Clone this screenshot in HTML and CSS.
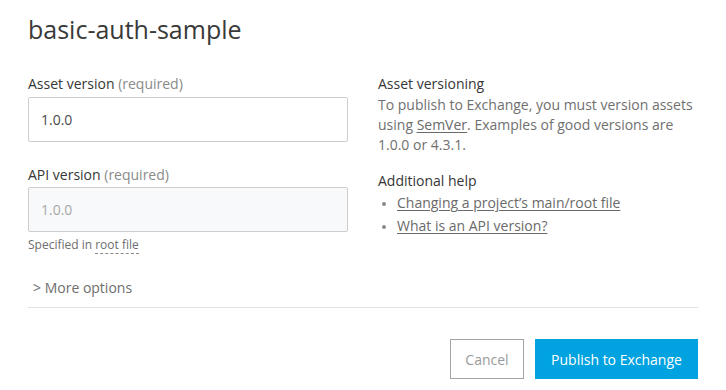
FILE: index.html
```html
<!DOCTYPE html>
<html>
<head>
<meta charset="utf-8">
<link rel="stylesheet" href="styles.css">
</head>
<body>
<div class="dialog">
  <h1 class="title">basic-auth-sample</h1>
  <div class="columns">
    <div class="form">
      <div class="field">
        <label class="label">Asset version <span class="req">(required)</span></label>
        <div class="input">1.0.0</div>
      </div>
      <div class="field">
        <label class="label tight">API version <span class="req">(required)</span></label>
        <div class="input disabled">1.0.0</div>
        <div class="hint">Specified in <span class="dotted">root file</span></div>
      </div>
    </div>
    <div class="help">
      <div class="help-title">Asset versioning</div>
      <p class="help-text">To publish to Exchange, you must version assets using <span class="link">SemVer</span>. Examples of good versions are 1.0.0 or 4.3.1.</p>
      <div class="help-title second">Additional help</div>
      <ul class="links">
        <li><span class="link">Changing a project’s main/root file</span></li>
        <li><span class="link">What is an API version?</span></li>
      </ul>
    </div>
  </div>
  <div class="more">&gt; More options</div>
  <div class="footer">
    <button class="btn cancel">Cancel</button>
    <button class="btn primary">Publish to Exchange</button>
  </div>
</div>
</body>
</html>
```

FILE: styles.css
```css
* { box-sizing: border-box; }
html, body { margin: 0; padding: 0; background: #fff; }
body { font-family: "Open Sans", "Noto Sans", sans-serif; color: #3e3e3e; }
.dialog { width: 726px; padding: 0 28px; }
.title { margin: 0; padding-top: 13px; font-size: 25px; font-weight: 400; line-height: 32px; color: #393939; }
.columns { display: grid; grid-template-columns: 320px 320px; column-gap: 30px; margin-top: 29px; }
.field { display: flex; flex-direction: column; }
.field + .field { margin-top: 23px; }
.label { font-size: 14px; line-height: 20px; color: #363636; margin-bottom: 3px; }
.label.tight { margin-bottom: 2px; }
.req { color: #8a8a8a; }
.input { height: 45px; border: 1px solid #cdcdcd; border-radius: 2px; padding: 0 12px; font-size: 14px; line-height: 43px; color: #4a4a4a; }
.input.disabled { background: #f8f9fa; color: #a8a8a8; }
.hint { font-size: 12px; line-height: 15px; color: #6e6e6e; margin-top: 5px; }
.dotted { border-bottom: 1px dashed #8a8a8a; }
.help { font-size: 14px; line-height: 20px; }
.help-title { color: #363636; }
.help-title.second { margin-top: 16px; }
.help-text { margin: 1px 0 0; color: #707070; line-height: 20px; }
.link { color: #6a6a6a; text-decoration: underline; text-underline-offset: 2px; }
.links { margin: 2px 0 0; padding-left: 19px; color: #6a6a6a; }
.links li { line-height: 20px; margin-bottom: 3px; }
.links li::marker { font-size: 11px; color: #8a8a8a; }
.more { margin-top: 26px; padding-left: 5px; font-size: 14px; line-height: 20px; color: #6e6e6e; height: 30px; border-bottom: 1px solid #e2e2e2; }
.footer { display: flex; justify-content: flex-end; gap: 11px; margin-top: 31px; }
.btn { font-family: "Open Sans", "Noto Sans", sans-serif; font-size: 14px; height: 40px; border-radius: 0; cursor: pointer; }
.cancel { width: 74px; background: #fff; border: 1px solid #a3a3a3; color: #9a9a9a; }
.primary { width: 163px; background: #00a2df; border: 1px solid #00a2df; color: #fff; }
```
